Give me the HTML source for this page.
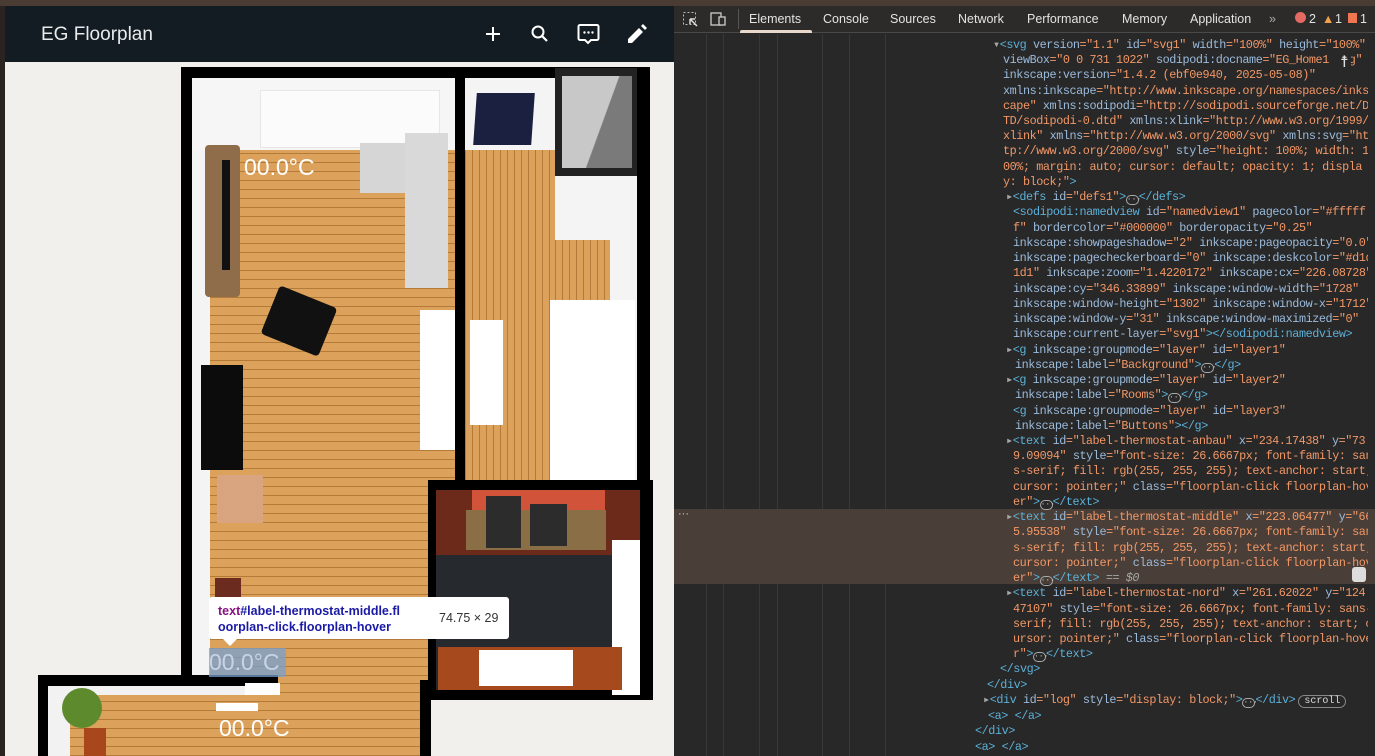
<!DOCTYPE html>
<html><head><meta charset="utf-8"><style>
*{margin:0;padding:0;box-sizing:border-box}
body{width:1375px;height:756px;overflow:hidden;background:#282828;position:relative;font-family:"Liberation Sans",sans-serif}
.a{position:absolute}
.ln{position:absolute;white-space:pre;font-family:"Liberation Mono",monospace;font-size:11.8px;line-height:15px;color:#f29766;letter-spacing:-0.43px}
.t{color:#5db0d7}.n{color:#9bbbdc}.v{color:#f29766}.p{color:#a6a6a6}
.wood{background-color:#d9a058;background-image:repeating-linear-gradient(0deg,#b47a38 0 1px,#dca25c 1px 9px)}
.woodv{background-color:#d9a058;background-image:repeating-linear-gradient(90deg,#b47a38 0 1px,#dca25c 1px 7px)}
.ell{display:inline-block;width:13px;height:10px;border:1px solid #aaa;border-radius:5px;vertical-align:-1px;font-size:8px;line-height:7px;text-align:center;color:#ccc;letter-spacing:0}
.tab{position:absolute;top:12px;font-size:12.5px;color:#e3e3e3}
</style></head><body>
<div class="a" style="left:0;top:0;width:1375px;height:6px;background:#4a3c32"></div>
<div class="a" style="left:0;top:6px;width:5px;height:750px;background:#2b231f"></div>
<div class="a" style="left:5px;top:6px;width:669px;height:56px;background:#131c22"></div>
<div class="a" style="left:41px;top:24px;font-size:19px;color:#e8eaeb">EG Floorplan</div>
<svg class="a" style="left:480px;top:21px" width="170" height="26" viewBox="0 0 170 26">
<path d="M13 6v14M6 13h14" stroke="#fff" stroke-width="2"/>
<circle cx="58" cy="11" r="5.5" stroke="#fff" stroke-width="2" fill="none"/><path d="M62 15l5 5" stroke="#fff" stroke-width="2.2"/>
<path d="M100 4h17a1.5 1.5 0 0 1 1.5 1.5v12a1.5 1.5 0 0 1-1.5 1.5h-6l-3 3-3-3h-5a1.5 1.5 0 0 1-1.5-1.5v-12a1.5 1.5 0 0 1 1.5-1.5z" stroke="#fff" stroke-width="2" fill="none"/>
<circle cx="104.5" cy="11.5" r="1.2" fill="#fff"/><circle cx="108.5" cy="11.5" r="1.2" fill="#fff"/><circle cx="112.5" cy="11.5" r="1.2" fill="#fff"/>
<path d="M148 22v-4l11-11 4 4-11 11z M161 5l2-2 4 4-2 2z" fill="#fff"/>
</svg>
<div class="a" style="left:5px;top:62px;width:669px;height:694px;background:#f1f0ec"></div>
<div class="a" style="left:181px;top:67px;width:469px;height:614px;background:#000"></div>
<div class="a" style="left:192px;top:78px;width:263px;height:602px;background:#f4f4f4"></div>
<div class="a wood" style="left:210px;top:150px;width:245px;height:535px"></div>
<div class="a" style="left:192px;top:78px;width:263px;height:72px;background:#f6f6f6"></div>
<div class="a" style="left:260px;top:90px;width:180px;height:58px;background:#fbfbfb;border:1px solid #e6e6e6"></div>
<div class="a" style="left:205px;top:145px;width:35px;height:152px;background:#8f6c4a;border-radius:4px"></div>
<div class="a" style="left:222px;top:160px;width:8px;height:110px;background:#111"></div>
<div class="a" style="left:360px;top:143px;width:88px;height:50px;background:#d6d6d6"></div>
<div class="a" style="left:405px;top:133px;width:43px;height:155px;background:#d9d9d9"></div>
<div class="a" style="left:268px;top:295px;width:62px;height:52px;background:#111;transform:rotate(22deg);border-radius:4px"></div>
<div class="a" style="left:201px;top:365px;width:42px;height:105px;background:#0c0c0c"></div>
<div class="a" style="left:217px;top:475px;width:46px;height:48px;background:#d9a580"></div>
<div class="a" style="left:215px;top:578px;width:26px;height:30px;background:#6b2b1e"></div>
<div class="a" style="left:420px;top:310px;width:35px;height:140px;background:#fff"></div>
<div class="a" style="left:455px;top:78px;width:10px;height:402px;background:#000"></div>
<div class="a" style="left:465px;top:78px;width:172px;height:402px;background:#f4f4f4"></div>
<div class="a woodv" style="left:465px;top:150px;width:90px;height:330px"></div>
<div class="a woodv" style="left:555px;top:240px;width:55px;height:240px"></div>
<div class="a" style="left:470px;top:320px;width:33px;height:105px;background:#fff"></div>
<div class="a" style="left:550px;top:300px;width:85px;height:180px;background:#fff"></div>
<div class="a" style="left:475px;top:93px;width:58px;height:52px;background:#1b2040;transform:skewX(-4deg)"></div>
<div class="a" style="left:555px;top:68px;width:82px;height:108px;background:#222"></div>
<div class="a" style="left:562px;top:76px;width:70px;height:92px;background:linear-gradient(110deg,#c8c8c8 55%,#7a7a7a 56%)"></div>
<div class="a" style="left:637px;top:68px;width:13px;height:612px;background:#000"></div>
<div class="a" style="left:428px;top:480px;width:225px;height:220px;background:#000"></div>
<div class="a" style="left:436px;top:490px;width:204px;height:200px;background:#262a2e"></div>
<div class="a" style="left:436px;top:490px;width:204px;height:65px;background:#6b2a1a"></div>
<div class="a" style="left:472px;top:490px;width:133px;height:20px;background:#d0533a"></div>
<div class="a" style="left:466px;top:510px;width:140px;height:40px;background:#8a6e45"></div>
<div class="a" style="left:486px;top:496px;width:35px;height:52px;background:#2c2c2c"></div>
<div class="a" style="left:530px;top:504px;width:37px;height:42px;background:#2c2c2c"></div>
<div class="a" style="left:612px;top:540px;width:28px;height:155px;background:#fff"></div>
<div class="a" style="left:438px;top:647px;width:184px;height:43px;background:#a6491c"></div>
<div class="a" style="left:479px;top:650px;width:94px;height:36px;background:#fff"></div>
<div class="a" style="left:420px;top:680px;width:11px;height:76px;background:#000"></div>
<div class="a wood" style="left:280px;top:680px;width:140px;height:76px"></div>
<div class="a" style="left:38px;top:675px;width:240px;height:81px;background:#000"></div>
<div class="a" style="left:48px;top:686px;width:232px;height:70px;background:#f2f2f2"></div>
<div class="a wood" style="left:70px;top:695px;width:210px;height:61px"></div>
<div class="a" style="left:62px;top:688px;width:40px;height:40px;background:#5e8a2e;border-radius:50%"></div>
<div class="a" style="left:84px;top:728px;width:22px;height:28px;background:#a8461c"></div>
<div class="a" style="left:216px;top:703px;width:42px;height:8px;background:#fff"></div>
<div class="a" style="left:245px;top:683px;width:35px;height:12px;background:#fff"></div>
<div class="a" style="left:244px;top:154px;font-size:23px;color:#fff">00.0°C</div>
<div class="a" style="left:209px;top:648px;width:77px;height:29px;background:rgba(120,160,210,.75)"></div>
<div class="a" style="left:209px;top:649px;font-size:23px;color:#c8d4e6">00.0°C</div>
<div class="a" style="left:219px;top:715px;font-size:23px;color:#fff">00.0°C</div>
<div class="a" style="left:209px;top:597px;width:300px;height:42px;background:#fff;border-radius:3px"></div>
<div class="a" style="left:222px;top:638px;width:0;height:0;border-left:8px solid transparent;border-right:8px solid transparent;border-top:8px solid #fff"></div>
<div class="a" style="left:218px;top:603px;font-size:12.5px;font-weight:bold;color:#1a1aa6;line-height:16px"><span style="color:#881280">text</span>#label-thermostat-middle.fl<br>oorplan-click.floorplan-hover</div>
<div class="a" style="left:439px;top:611px;font-size:12.5px;color:#333">74.75 × 29</div>
<div class="a" style="left:674px;top:6px;width:701px;height:27px;background:#2d2b29;border-bottom:1px solid #494949"></div>
<svg class="a" style="left:682px;top:11px" width="46" height="17"><rect x="1.5" y="1.5" width="12" height="12" fill="none" stroke="#bbb" stroke-dasharray="2 2"/><path d="M8 8l7 7M8 8v5M8 8h5" stroke="#ddd" stroke-width="1.5"/><rect x="29" y="2" width="10" height="12" fill="none" stroke="#ccc" stroke-width="1.3"/><rect x="37" y="6" width="6" height="8" fill="#2d2b29" stroke="#ccc" stroke-width="1.3"/></svg>
<div class="a" style="left:738px;top:9px;width:1px;height:20px;background:#555"></div>
<div class="tab" style="left:749px">Elements</div>
<div class="a" style="left:740px;top:30px;width:72px;height:3px;background:#e8d9cc;border-radius:2px 2px 0 0"></div>
<div class="tab" style="left:823px">Console</div>
<div class="tab" style="left:890px">Sources</div>
<div class="tab" style="left:958px">Network</div>
<div class="tab" style="left:1027px">Performance</div>
<div class="tab" style="left:1122px">Memory</div>
<div class="tab" style="left:1190px">Application</div>
<div class="tab" style="left:1269px;color:#aaa">»</div>
<div class="a" style="left:1295px;top:12px;width:11px;height:11px;border-radius:50%;background:#e46962"></div>
<div class="tab" style="left:1309px">2</div>
<div class="tab" style="left:1322px;color:#f1a04b">▲</div><div class="tab" style="left:1335px">1</div>
<div class="a" style="left:1348px;top:13px;width:9px;height:10px;background:#ee7651"></div>
<div class="tab" style="left:1360px">1</div>
<div class="a" style="left:706px;top:34px;width:1px;height:722px;background:#383838"></div>
<div class="a" style="left:723px;top:34px;width:1px;height:722px;background:#383838"></div>
<div class="a" style="left:759px;top:34px;width:1px;height:722px;background:#383838"></div>
<div class="a" style="left:777px;top:34px;width:1px;height:722px;background:#383838"></div>
<div class="a" style="left:822px;top:34px;width:1px;height:722px;background:#383838"></div>
<div class="a" style="left:849px;top:34px;width:1px;height:722px;background:#383838"></div>
<div class="a" style="left:885px;top:34px;width:1px;height:722px;background:#383838"></div>
<div class="a" style="left:674px;top:509px;width:701px;height:75px;background:#4a3f38"></div>
<div class="a" style="left:678px;top:508px;color:#ccc;font-size:11px">···</div>
<div class="a" style="left:1352px;top:567px;width:14px;height:15px;background:#ddd;border-radius:3px"></div>
<div id="code" style="position:absolute;left:0;top:0;width:1368px;height:756px;overflow:hidden">
<div class="ln" style="top:38px;left:993px"><span class="p">▾</span><span class="t">&lt;svg</span> <span class="n">version</span>=<span class="v">"1.1"</span> <span class="n">id</span>=<span class="v">"svg1"</span> <span class="n">width</span>=<span class="v">"100%"</span> <span class="n">height</span>=<span class="v">"100%"</span></div>
<div class="ln" style="top:53px;left:1003px"><span class="n">viewBox</span>=<span class="v">"0 0 731 1022"</span> <span class="n">sodipodi:docname</span>=<span class="v">"EG_Home1   g"</span></div>
<div class="ln" style="top:68px;left:1003px"><span class="n">inkscape:version</span>=<span class="v">"1.4.2 (ebf0e940, 2025-05-08)"</span></div>
<div class="ln" style="top:84px;left:1003px"><span class="n">xmlns:inkscape</span>=<span class="v">"http://www.inkscape.org/namespaces/inks</span></div>
<div class="ln" style="top:99px;left:1003px"><span class="v">cape"</span> <span class="n">xmlns:sodipodi</span>=<span class="v">"http://sodipodi.sourceforge.net/D</span></div>
<div class="ln" style="top:114px;left:1003px"><span class="v">TD/sodipodi-0.dtd"</span> <span class="n">xmlns:xlink</span>=<span class="v">"http://www.w3.org/1999/</span></div>
<div class="ln" style="top:129px;left:1003px"><span class="v">xlink"</span> <span class="n">xmlns</span>=<span class="v">"http://www.w3.org/2000/svg"</span> <span class="n">xmlns:svg</span>=<span class="v">"ht</span></div>
<div class="ln" style="top:144px;left:1003px"><span class="v">tp://www.w3.org/2000/svg"</span> <span class="n">style</span>=<span class="v">"height: 100%; width: 1</span></div>
<div class="ln" style="top:160px;left:1003px"><span class="v">00%; margin: auto; cursor: default; opacity: 1; displa</span></div>
<div class="ln" style="top:175px;left:1003px"><span class="v">y: block;"</span><span class="t">&gt;</span></div>
<div class="ln" style="top:190px;left:1006px"><span class="p">▸</span><span class="t">&lt;defs</span> <span class="n">id</span>=<span class="v">"defs1"</span><span class="t">&gt;</span><span class="ell">···</span><span class="t">&lt;/defs&gt;</span></div>
<div class="ln" style="top:205px;left:1013px"><span class="t">&lt;sodipodi:namedview</span> <span class="n">id</span>=<span class="v">"namedview1"</span> <span class="n">pagecolor</span>=<span class="v">"#fffff</span></div>
<div class="ln" style="top:221px;left:1013px"><span class="v">f"</span> <span class="n">bordercolor</span>=<span class="v">"#000000"</span> <span class="n">borderopacity</span>=<span class="v">"0.25"</span></div>
<div class="ln" style="top:236px;left:1013px"><span class="n">inkscape:showpageshadow</span>=<span class="v">"2"</span> <span class="n">inkscape:pageopacity</span>=<span class="v">"0.0"</span></div>
<div class="ln" style="top:251px;left:1013px"><span class="n">inkscape:pagecheckerboard</span>=<span class="v">"0"</span> <span class="n">inkscape:deskcolor</span>=<span class="v">"#d1d</span></div>
<div class="ln" style="top:266px;left:1013px"><span class="v">1d1"</span> <span class="n">inkscape:zoom</span>=<span class="v">"1.4220172"</span> <span class="n">inkscape:cx</span>=<span class="v">"226.08728"</span></div>
<div class="ln" style="top:282px;left:1013px"><span class="n">inkscape:cy</span>=<span class="v">"346.33899"</span> <span class="n">inkscape:window-width</span>=<span class="v">"1728"</span></div>
<div class="ln" style="top:297px;left:1013px"><span class="n">inkscape:window-height</span>=<span class="v">"1302"</span> <span class="n">inkscape:window-x</span>=<span class="v">"1712"</span></div>
<div class="ln" style="top:312px;left:1013px"><span class="n">inkscape:window-y</span>=<span class="v">"31"</span> <span class="n">inkscape:window-maximized</span>=<span class="v">"0"</span></div>
<div class="ln" style="top:327px;left:1013px"><span class="n">inkscape:current-layer</span>=<span class="v">"svg1"</span><span class="t">&gt;&lt;/sodipodi:namedview&gt;</span></div>
<div class="ln" style="top:343px;left:1006px"><span class="p">▸</span><span class="t">&lt;g</span> <span class="n">inkscape:groupmode</span>=<span class="v">"layer"</span> <span class="n">id</span>=<span class="v">"layer1"</span></div>
<div class="ln" style="top:358px;left:1015px"><span class="n">inkscape:label</span>=<span class="v">"Background"</span><span class="t">&gt;</span><span class="ell">···</span><span class="t">&lt;/g&gt;</span></div>
<div class="ln" style="top:373px;left:1006px"><span class="p">▸</span><span class="t">&lt;g</span> <span class="n">inkscape:groupmode</span>=<span class="v">"layer"</span> <span class="n">id</span>=<span class="v">"layer2"</span></div>
<div class="ln" style="top:388px;left:1015px"><span class="n">inkscape:label</span>=<span class="v">"Rooms"</span><span class="t">&gt;</span><span class="ell">···</span><span class="t">&lt;/g&gt;</span></div>
<div class="ln" style="top:404px;left:1013px"><span class="t">&lt;g</span> <span class="n">inkscape:groupmode</span>=<span class="v">"layer"</span> <span class="n">id</span>=<span class="v">"layer3"</span></div>
<div class="ln" style="top:419px;left:1015px"><span class="n">inkscape:label</span>=<span class="v">"Buttons"</span><span class="t">&gt;&lt;/g&gt;</span></div>
<div class="ln" style="top:434px;left:1006px"><span class="p">▸</span><span class="t">&lt;text</span> <span class="n">id</span>=<span class="v">"label-thermostat-anbau"</span> <span class="n">x</span>=<span class="v">"234.17438"</span> <span class="n">y</span>=<span class="v">"73</span></div>
<div class="ln" style="top:449px;left:1013px"><span class="v">9.09094"</span> <span class="n">style</span>=<span class="v">"font-size: 26.6667px; font-family: san</span></div>
<div class="ln" style="top:464px;left:1013px"><span class="v">s-serif; fill: rgb(255, 255, 255); text-anchor: start;</span></div>
<div class="ln" style="top:480px;left:1013px"><span class="v">cursor: pointer;"</span> <span class="n">class</span>=<span class="v">"floorplan-click floorplan-hov</span></div>
<div class="ln" style="top:495px;left:1013px"><span class="v">er"</span><span class="t">&gt;</span><span class="ell">···</span><span class="t">&lt;/text&gt;</span></div>
<div class="ln" style="top:510px;left:1006px"><span class="p">▸</span><span class="t">&lt;text</span> <span class="n">id</span>=<span class="v">"label-thermostat-middle"</span> <span class="n">x</span>=<span class="v">"223.06477"</span> <span class="n">y</span>=<span class="v">"66</span></div>
<div class="ln" style="top:525px;left:1013px"><span class="v">5.95538"</span> <span class="n">style</span>=<span class="v">"font-size: 26.6667px; font-family: san</span></div>
<div class="ln" style="top:541px;left:1013px"><span class="v">s-serif; fill: rgb(255, 255, 255); text-anchor: start;</span></div>
<div class="ln" style="top:556px;left:1013px"><span class="v">cursor: pointer;"</span> <span class="n">class</span>=<span class="v">"floorplan-click floorplan-hov</span></div>
<div class="ln" style="top:571px;left:1013px"><span class="v">er"</span><span class="t">&gt;</span><span class="ell">···</span><span class="t">&lt;/text&gt;</span> <span class="p">== <i>$0</i></span></div>
<div class="ln" style="top:586px;left:1006px"><span class="p">▸</span><span class="t">&lt;text</span> <span class="n">id</span>=<span class="v">"label-thermostat-nord"</span> <span class="n">x</span>=<span class="v">"261.62022"</span> <span class="n">y</span>=<span class="v">"124.</span></div>
<div class="ln" style="top:602px;left:1013px"><span class="v">47107"</span> <span class="n">style</span>=<span class="v">"font-size: 26.6667px; font-family: sans-</span></div>
<div class="ln" style="top:617px;left:1013px"><span class="v">serif; fill: rgb(255, 255, 255); text-anchor: start; c</span></div>
<div class="ln" style="top:632px;left:1013px"><span class="v">ursor: pointer;"</span> <span class="n">class</span>=<span class="v">"floorplan-click floorplan-hove</span></div>
<div class="ln" style="top:647px;left:1013px"><span class="v">r"</span><span class="t">&gt;</span><span class="ell">···</span><span class="t">&lt;/text&gt;</span></div>
<div class="ln" style="top:662px;left:1000px"><span class="t">&lt;/svg&gt;</span></div>
<div class="ln" style="top:678px;left:987px"><span class="t">&lt;/div&gt;</span></div>
<div class="ln" style="top:693px;left:983px"><span class="p">▸</span><span class="t">&lt;div</span> <span class="n">id</span>=<span class="v">"log"</span> <span class="n">style</span>=<span class="v">"display: block;"</span><span class="t">&gt;</span><span class="ell">···</span><span class="t">&lt;/div&gt;</span><span style="display:inline-block;border:1px solid #888;border-radius:7px;padding:0 5px;margin-left:3px;color:#ddd;font-size:10px;line-height:11px;letter-spacing:0">scroll</span></div>
<div class="ln" style="top:709px;left:988px"><span class="t">&lt;a&gt; &lt;/a&gt;</span></div>
<div class="ln" style="top:724px;left:975px"><span class="t">&lt;/div&gt;</span></div>
<div class="ln" style="top:740px;left:975px"><span class="t">&lt;a&gt; &lt;/a&gt;</span></div>
</div>
<div class="a" style="left:1338px;top:52px;color:#ddd;font-size:16px;background:#282828;padding:0 2px">☨</div>
</body></html>
